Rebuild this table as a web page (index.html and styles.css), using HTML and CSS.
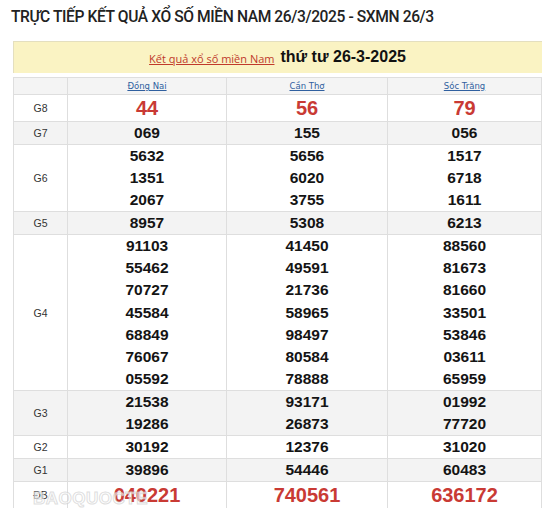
FILE: index.html
```html
<!DOCTYPE html>
<html lang="vi">
<head>
<meta charset="utf-8">
<title>SXMN 26/3</title>
<link rel="stylesheet" href="styles.css">
</head>
<body>
<div class="page">
  <h1 class="title">TRỰC TIẾP KẾT QUẢ XỔ SỐ MIỀN NAM 26/3/2025 - SXMN 26/3</h1>
  <div class="banner">
    <a class="banner-link" href="#">Kết quả xổ số miền Nam</a>
    <span class="banner-date">thứ tư 26-3-2025</span>
  </div>
  <div class="table-wrap">
    <table class="results">
      <colgroup>
        <col class="c-label"><col class="c-1"><col class="c-2"><col class="c-3">
      </colgroup>
      <thead>
        <tr class="head">
          <th></th>
          <th><a href="#">Đồng Nai</a></th>
          <th><a href="#">Cần Thơ</a></th>
          <th><a href="#">Sóc Trăng</a></th>
        </tr>
      </thead>
      <tbody>
        <tr class="big">
          <td class="lbl">G8</td>
          <td><div class="n red">44</div></td>
          <td><div class="n red">56</div></td>
          <td><div class="n red">79</div></td>
        </tr>
        <tr class="alt">
          <td class="lbl">G7</td>
          <td><div class="n">069</div></td>
          <td><div class="n">155</div></td>
          <td><div class="n">056</div></td>
        </tr>
        <tr>
          <td class="lbl">G6</td>
          <td><div class="n">5632</div><div class="n">1351</div><div class="n">2067</div></td>
          <td><div class="n">5656</div><div class="n">6020</div><div class="n">3755</div></td>
          <td><div class="n">1517</div><div class="n">6718</div><div class="n">1611</div></td>
        </tr>
        <tr class="alt">
          <td class="lbl">G5</td>
          <td><div class="n">8957</div></td>
          <td><div class="n">5308</div></td>
          <td><div class="n">6213</div></td>
        </tr>
        <tr class="g4">
          <td class="lbl">G4</td>
          <td><div class="n">91103</div><div class="n">55462</div><div class="n">70727</div><div class="n">45584</div><div class="n">68849</div><div class="n">76067</div><div class="n">05592</div></td>
          <td><div class="n">41450</div><div class="n">49591</div><div class="n">21736</div><div class="n">58965</div><div class="n">98497</div><div class="n">80584</div><div class="n">78888</div></td>
          <td><div class="n">88560</div><div class="n">81673</div><div class="n">81660</div><div class="n">33501</div><div class="n">53846</div><div class="n">03611</div><div class="n">65959</div></td>
        </tr>
        <tr class="alt">
          <td class="lbl">G3</td>
          <td><div class="n">21538</div><div class="n">19286</div></td>
          <td><div class="n">93171</div><div class="n">26873</div></td>
          <td><div class="n">01992</div><div class="n">77720</div></td>
        </tr>
        <tr>
          <td class="lbl">G2</td>
          <td><div class="n">30192</div></td>
          <td><div class="n">12376</div></td>
          <td><div class="n">31020</div></td>
        </tr>
        <tr class="alt">
          <td class="lbl">G1</td>
          <td><div class="n">39896</div></td>
          <td><div class="n">54446</div></td>
          <td><div class="n">60483</div></td>
        </tr>
        <tr class="big">
          <td class="lbl">ĐB</td>
          <td><div class="n red">040221</div></td>
          <td><div class="n red">740561</div></td>
          <td><div class="n red">636172</div></td>
        </tr>
      </tbody>
    </table>
    <div class="watermark">BAOQUOCTE</div>
  </div>
</div>
</body>
</html>
```

FILE: styles.css
```css
html, body {
  margin: 0;
  padding: 0;
  background: #ffffff;
}
.page {
  padding: 0 6px 0 13px;
  font-family: "Liberation Sans", Arial, sans-serif;
  color: #111;
}
.title {
  margin: 0 0 0 -2px;
  padding-top: 6px;
  height: 41px;
  box-sizing: border-box;
  font-family: Roboto, "Liberation Sans", sans-serif;
  font-weight: 500;
  font-size: 15.6px;
  line-height: 22px;
  color: #222;
  letter-spacing: -0.4px;
  white-space: nowrap;
}
.banner {
  height: 32px;
  background: #faf3c3;
  display: flex;
  align-items: center;
  justify-content: center;
  gap: 6px;
  box-shadow: inset 1px 1px 0 #e4dfbf;
  margin-bottom: 4px;
}
.banner-link {
  font-family: "Open Sans", "Liberation Sans", sans-serif;
  font-size: 11px;
  color: #c0392b;
  text-decoration: underline;
  padding-top: 2px;
}
.banner-date {
  font-family: "Liberation Sans", Arial, sans-serif;
  font-weight: bold;
  font-size: 16px;
  color: #111;
}
.table-wrap {
  position: relative;
}
.results {
  width: 100%;
  border-collapse: collapse;
  table-layout: fixed;
}
.c-label { width: 54px; }
.c-1 { width: 159px; }
.c-2 { width: 161px; }
.results th,
.results td {
  border: 1px solid #dedede;
  padding: 0;
  text-align: center;
  vertical-align: middle;
}
.head th {
  height: 16px;
  background: #f4f4f4;
  font-family: "DejaVu Sans", Verdana, sans-serif;
  font-size: 8.5px;
  font-weight: normal;
  line-height: 16px;
}
.head th a {
  color: #2f5f9f;
  text-decoration: underline;
}
.lbl {
  font-family: "Liberation Sans", Arial, sans-serif;
  font-size: 10.5px;
  color: #333;
}
.alt td {
  background: #f3f3f3;
}
.n {
  font-weight: bold;
  font-size: 15.5px;
  line-height: 22px;
  color: #141414;
}
.g4 .n {
  line-height: 22.2px;
}
.n.red {
  font-size: 20px;
  line-height: 26px;
  color: #c93a34;
}
.watermark {
  position: absolute;
  left: 20px;
  bottom: 2px;
  font-family: "Liberation Sans", sans-serif;
  font-weight: bold;
  font-size: 17px;
  line-height: 17px;
  letter-spacing: 0.5px;
  color: rgba(255, 255, 255, 0.6);
  -webkit-text-stroke: 1px rgba(200, 200, 200, 0.6);
  pointer-events: none;
}
```
